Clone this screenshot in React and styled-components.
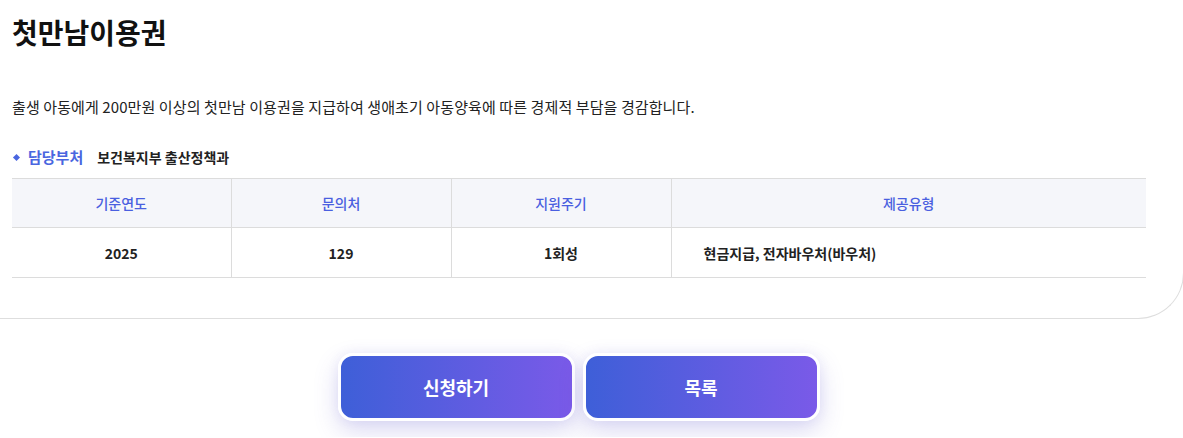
import React from "react";
import styled, { createGlobalStyle } from "styled-components";

const GlobalStyle = createGlobalStyle`
  html {
    overflow: hidden;
  }
  html, body {
    margin: 0;
    padding: 0;
    background: #ffffff;
  }
  body {
    font-family: "Noto Sans CJK KR", "Noto Sans", sans-serif;
    color: #222;
  }
`;

const Page = styled.div`
  width: 1183px;
  padding-bottom: 16px;
`;

const Card = styled.section`
  width: 1184px;
  box-sizing: border-box;
  padding: 14px 38px 40px 12px;
  background: #fff;
  border-right: 1px solid #dedede;
  border-bottom: 1px solid #dedede;
  border-bottom-right-radius: 46px;
`;

const Title = styled.h1`
  margin: 0;
  font-size: 28px;
  line-height: 36px;
  font-weight: 700;
  color: #111;
`;

const Desc = styled.p`
  margin: 47px 0 0;
  font-size: 15px;
  line-height: 20px;
  letter-spacing: 0.1px;
  color: #222;
`;

const InfoRow = styled.div`
  display: flex;
  align-items: center;
  margin-top: 30px;
  font-size: 14px;
  line-height: 20px;
  font-weight: 700;
`;

const Label = styled.span`
  display: flex;
  align-items: center;
  font-size: 15px;
  color: #4a66e0;
  margin-right: 14px;
  &:before {
    content: "";
    width: 5px;
    height: 5px;
    background: #4a66e0;
    transform: rotate(45deg);
    margin: 0 9px 0 2px;
  }
`;

const Value = styled.span`
  color: #222;
`;

const Table = styled.table`
  margin-top: 11px;
  width: 1134px;
  border-collapse: collapse;
  border-top: 1px solid #dcdcdc;
  table-layout: fixed;
`;

const Th = styled.th`
  height: 48px;
  padding: 0;
  background: #f5f6fa;
  color: #4a5fe0;
  font-size: 14px;
  font-weight: 500;
  border-bottom: 1px solid #dcdcdc;
  border-left: 1px solid #dcdcdc;
  &:first-child {
    border-left: none;
  }
`;

const Td = styled.td`
  height: 49px;
  padding: ${props => (props.left ? "0 0 0 32px" : "0")};
  text-align: ${props => (props.left ? "left" : "center")};
  font-size: 14px;
  font-weight: 700;
  color: #222;
  border-bottom: 1px solid #dcdcdc;
  border-left: 1px solid #dcdcdc;
  &:first-child {
    border-left: none;
  }
`;

const ButtonBar = styled.div`
  display: flex;
  justify-content: center;
  gap: 8px;
  padding: 34px 26px 0 0;
`;

const Button = styled.button`
  width: 237px;
  height: 68px;
  box-sizing: border-box;
  border: 3px solid #fff;
  border-radius: 15px;
  background: linear-gradient(90deg, #3e5fd8 0%, #7a5ae8 100%);
  color: #fff;
  font-family: inherit;
  font-size: 18px;
  font-weight: 700;
  cursor: pointer;
  box-shadow: 0 10px 24px rgba(90, 80, 200, 0.22), 0 0 12px rgba(90, 80, 200, 0.08);
`;

const rows = [
  { year: "2025", contact: "129", cycle: "1회성", type: "현금지급, 전자바우처(바우처)" },
];

export default function App() {
  return (
    <Page>
      <GlobalStyle />
      <Card>
        <Title>첫만남이용권</Title>
        <Desc>
          출생 아동에게 200만원 이상의 첫만남 이용권을 지급하여 생애초기 아동양육에 따른 경제적 부담을 경감합니다.
        </Desc>
        <InfoRow>
          <Label>담당부처</Label>
          <Value>보건복지부 출산정책과</Value>
        </InfoRow>
        <Table>
          <colgroup>
            <col style={{ width: 219 }} />
            <col style={{ width: 220 }} />
            <col style={{ width: 220 }} />
            <col />
          </colgroup>
          <thead>
            <tr>
              <Th>기준연도</Th>
              <Th>문의처</Th>
              <Th>지원주기</Th>
              <Th>제공유형</Th>
            </tr>
          </thead>
          <tbody>
            {rows.map(r => (
              <tr key={r.year}>
                <Td>{r.year}</Td>
                <Td>{r.contact}</Td>
                <Td>{r.cycle}</Td>
                <Td left>{r.type}</Td>
              </tr>
            ))}
          </tbody>
        </Table>
      </Card>
      <ButtonBar>
        <Button>신청하기</Button>
        <Button>목록</Button>
      </ButtonBar>
    </Page>
  );
}
